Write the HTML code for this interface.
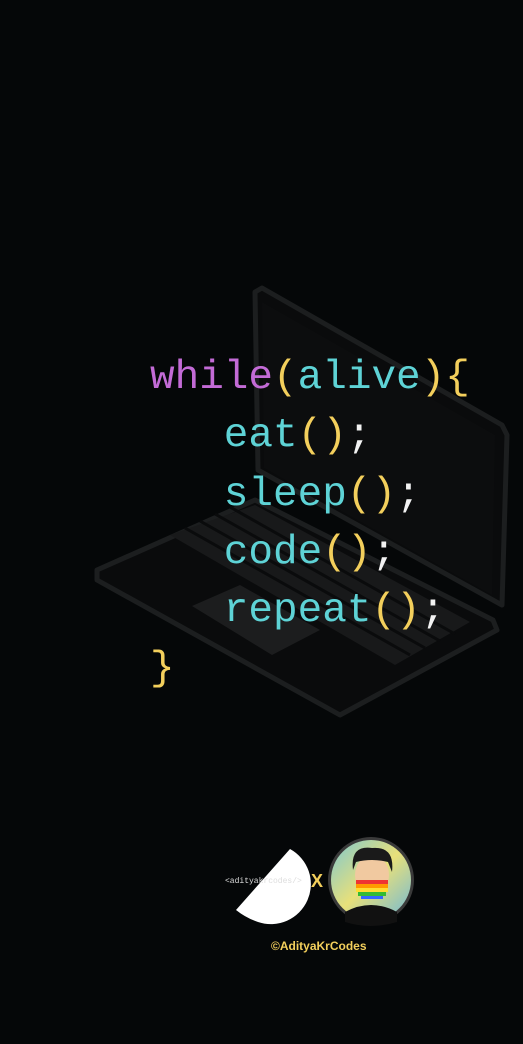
<!DOCTYPE html>
<html><head><meta charset="utf-8"><style>
html,body{margin:0;padding:0;background:#050708;}
body{width:523px;height:1044px;position:relative;overflow:hidden;}
.code{position:absolute;left:150px;top:5px;font-family:"Liberation Mono",monospace;font-size:41px;line-height:58px;white-space:pre;color:#5ed3d6;}
.p{color:#c36bd6}.y{color:#f3cf5c}.w{color:#f2f2f2}
.l{position:absolute;left:0;white-space:pre}
</style></head><body>
<svg width="523" height="1044" style="position:absolute;left:0;top:0">
 <g stroke="#1c1e1f" stroke-width="5" fill="#0a0b0c" stroke-linejoin="round">
  <path d="M255 292 L262 288 L502 425 L507 435 L502 605 L258 470 Z"/>
  <path d="M97 570 L255 500 L493 620 L497 630 L340 715 L97 580 Z"/>
 </g>
 <path d="M262 302 L495 435 L492 595 L264 468 Z" fill="#0c0d0e"/>
 <g fill="#18191a">
  <path d="M170 535 L255 505 L470 622 L395 665 Z"/>
  <path d="M192 606 L240 585 L320 630 L272 655 Z" fill="#1c1d1e"/>
 </g>
 <g stroke="#0a0b0c" stroke-width="3">
  <path d="M185 528 L410 655"/><path d="M200 521 L425 648"/><path d="M215 514 L440 641"/><path d="M230 507 L455 634"/>
 </g>
</svg>
<div class="code">
<div class="l" style="top:344px"><span class="p">while</span><span class="y">(</span>alive<span class="y">){</span></div>
<div class="l" style="top:402px">   eat<span class="y">()</span><span class="w">;</span></div>
<div class="l" style="top:461px">   sleep<span class="y">()</span><span class="w">;</span></div>
<div class="l" style="top:519px">   code<span class="y">()</span><span class="w">;</span></div>
<div class="l" style="top:577px">   repeat<span class="y">()</span><span class="w">;</span></div>
<div class="l" style="top:635px"><span class="y">}</span></div>
</div>
<svg width="523" height="1044" style="position:absolute;left:0;top:0">
 <path d="M290 849 A40 40 0 0 1 258 922 Q246 918 236 910 Z" fill="#fff"/>
 <text x="225" y="883" font-family="Liberation Mono,monospace" font-size="8" fill="#ddd">&lt;adityakrcodes/&gt;</text>
 <text x="311" y="887" font-family="Liberation Sans,sans-serif" font-size="18" font-weight="bold" fill="#f3cf5c">X</text>
 <defs><linearGradient id="g" x1="0" y1="0" x2="1" y2="1"><stop offset="0" stop-color="#7ec8d0"/><stop offset="0.5" stop-color="#e8e07a"/><stop offset="1" stop-color="#6fb8d8"/></linearGradient></defs>
 <circle cx="371" cy="880" r="43" fill="#3a3a3a"/>
 <circle cx="371" cy="880" r="40" fill="url(#g)"/>
 <path d="M345 912 Q371 898 397 912 L397 922 Q371 930 345 922Z" fill="#111"/>
 <ellipse cx="372" cy="875" rx="17" ry="20" fill="#f1c9a0"/>
 <path d="M353 870 Q350 845 372 848 Q395 846 392 872 L388 862 Q372 858 356 862Z" fill="#1a1a1a"/>
 <rect x="356" y="880" width="32" height="4" fill="#e33"/><rect x="356" y="884" width="32" height="4" fill="#f90"/><rect x="356" y="888" width="32" height="4" fill="#fd3"/><rect x="358" y="892" width="28" height="4" fill="#3b3"/><rect x="361" y="896" width="22" height="3" fill="#36f"/>
 <text x="271" y="950" font-family="Liberation Sans,sans-serif" font-size="12" font-weight="bold" fill="#f3cf5c">©AdityaKrCodes</text>
</svg>
</body></html>
